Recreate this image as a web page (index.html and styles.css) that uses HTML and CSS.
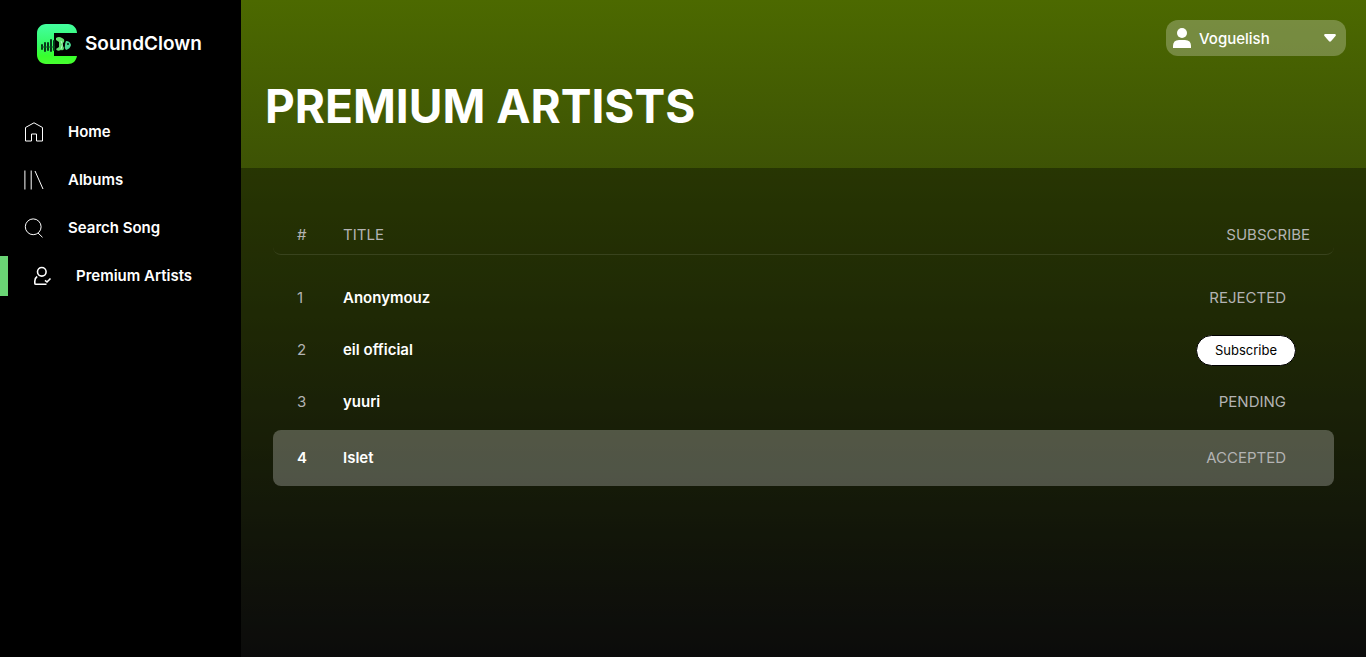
FILE: index.html
```html
<!DOCTYPE html>
<html lang="en">
<head>
<meta charset="utf-8">
<meta name="viewport" content="width=device-width, initial-scale=1">
<title>SoundClown - Premium Artists</title>
<link rel="stylesheet" href="styles.css">
</head>
<body>
<div class="app">
  <aside class="sidebar">
    <a class="brand" href="#">
      <svg class="brand-logo" viewBox="0 0 40 40" aria-hidden="true">
        <defs>
          <linearGradient id="logoFill" x1="0" y1="0" x2="0" y2="1">
            <stop offset="0" stop-color="#43ffa0"/>
            <stop offset="0.5" stop-color="#36fa68"/>
            <stop offset="0.8" stop-color="#38ff2c"/>
            <stop offset="1" stop-color="#48ff30"/>
          </linearGradient>
        </defs>
        <path fill="url(#logoFill)" d="M9 0H31C36 0 40 4 40 9H17V32H40C39 37 36 40 31 40H9C4 40 0 36 0 31V9C0 4 4 0 9 0Z"/>
        <path d="M5 21V25M8 19V27M11 19V26M14 16V27M17 17V26" stroke="#06351a" stroke-width="2" stroke-linecap="round"/>
        <path d="M4 23H18" stroke="#0a5725" stroke-width="1"/>
        <path fill="#62e070" d="M19 14Q22 12 25 14Q28 15 27 18L25 20L27 24Q27 27 24 26Q20 28 19 25L22 23V18L19 16Z"/>
        <path d="M24 17Q27 20 24 25" fill="none" stroke="#b6ffca" stroke-width="1"/>
        <path fill="#49dc93" d="M29 17Q33 17 34 21Q33 25 29 26Q27 24 28 21Q28 19 29 17Z"/>
        <circle cx="31" cy="20" r="1" fill="#05240d"/>
      </svg>
      <span>SoundClown</span>
    </a>
    <nav class="nav">
      <a class="nav-link" href="#">
        <svg class="nav-icon" viewBox="0 0 20 20" aria-hidden="true"><path d="M1.500 5.500L10 .8L18.500 5.500V19H12.500V12H7.500V19H1.500Z"/></svg>
        <span>Home</span>
      </a>
      <a class="nav-link" href="#">
        <svg class="nav-icon" viewBox="0 0 20 20" aria-hidden="true"><path d="M.9 .5V19.500M7.200 .5V19.500M11 1L19 19"/></svg>
        <span>Albums</span>
      </a>
      <a class="nav-link" href="#">
        <svg class="nav-icon" viewBox="0 0 20 20" aria-hidden="true"><circle cx="9.200" cy="8.800" r="7.900"/><path d="M14 15L18.500 19.300"/></svg>
        <span>Search Song</span>
      </a>
      <a class="nav-link nav-link-active" href="#" aria-current="page">
        <svg class="nav-icon nav-icon-bold" viewBox="0 0 20 20" aria-hidden="true"><circle cx="9.800" cy="5.800" r="4.300"/><path d="M5.200 10.500Q2.800 12 2.800 15.200V17.200Q2.800 18.300 4 18.300H14.500M13 14.300L15 16L18.500 12.500"/></svg>
        <span>Premium Artists</span>
      </a>
    </nav>
  </aside>
  <main class="main">
    <header class="hero">
      <button class="user" type="button">
        <svg class="user-icon" viewBox="0 0 18 20" aria-hidden="true"><circle cx="9" cy="5" r="5"/><path d="M0 20V18Q0 12 6 12H12Q18 12 18 18V20Z"/></svg>
        <span class="user-name">Voguelish</span>
        <svg class="user-caret" viewBox="0 0 12 8" aria-hidden="true"><path d="M1 0H11Q12.500 .8 11.500 2L7 7.300Q6 8.200 5 7.300L.5 2Q-.5 .8 1 0Z"/></svg>
      </button>
      <h1 class="title">PREMIUM ARTISTS</h1>
    </header>
    <section class="content">
      <table class="artists">
        <thead>
          <tr><th class="number" scope="col">#</th><th scope="col">TITLE</th><th class="status" scope="col">SUBSCRIBE</th></tr>
        </thead>
        <tbody>
          <tr><td class="number">1</td><td class="name">Anonymouz</td><td class="status">REJECTED</td></tr>
          <tr><td class="number">2</td><td class="name">eil official</td><td class="status status-action"><button class="subscribe" type="button">Subscribe</button></td></tr>
          <tr><td class="number">3</td><td class="name">yuuri</td><td class="status">PENDING</td></tr>
        </tbody>
        <tbody class="highlight">
          <tr><td class="number">4</td><td class="name">Islet</td><td class="status">ACCEPTED</td></tr>
        </tbody>
      </table>
    </section>
  </main>
</div>
</body>
</html>
```
FILE: styles.css
```css
* {
  box-sizing: border-box;
}

body {
  margin: 0;
  background: #000;
  color: #fff;
  font-family: Inter, "Liberation Sans", sans-serif;
  font-size: 15px;
  line-height: 24px;
}

a {
  color: inherit;
  text-decoration: none;
}

button {
  font-family: inherit;
  cursor: pointer;
}

.app {
  display: flex;
  min-height: 100vh;
}

.sidebar {
  flex: 0 0 241px;
  background: #000;
}

.brand {
  display: flex;
  align-items: center;
  gap: 8px;
  padding: 24px 0 0 37px;
  font-size: 19px;
  font-weight: 600;
}

.brand-logo {
  width: 40px;
  height: 40px;
}

.nav {
  display: flex;
  flex-direction: column;
  gap: 8px;
  padding-top: 48px;
}

.nav-link {
  display: flex;
  align-items: center;
  gap: 24px;
  height: 40px;
  padding-left: 24px;
  font-weight: 600;
}

.nav-link-active {
  border-left: 8px solid #6ad575;
}

.nav-icon {
  width: 20px;
  height: 20px;
  fill: none;
  stroke: #fff;
  stroke-width: 1;
}

.nav-icon-bold {
  stroke-width: 1.6;
}

.main {
  display: flex;
  flex: 1;
  flex-direction: column;
  background: linear-gradient(#4c6900, #121212);
}

.hero {
  display: flex;
  flex-direction: column;
  padding: 20px 20px 32px 24px;
}

.user {
  display: flex;
  align-self: flex-end;
  align-items: center;
  gap: 8px;
  width: 180px;
  height: 36px;
  padding: 0 10px 0 7px;
  border: 0;
  border-radius: 12px;
  background: rgba(255, 255, 255, 0.25);
  color: #fff;
  font-size: 15px;
  font-weight: 500;
}

.user-icon {
  width: 18px;
  height: 20px;
  fill: #fff;
}

.user-name {
  flex: 1;
  text-align: left;
}

.user-caret {
  width: 12px;
  height: 8px;
  fill: #fff;
}

.title {
  margin: 20px 0 0;
  font-size: 46px;
  font-weight: 700;
  line-height: 60px;
}

.content {
  flex: 1;
  padding: 48px 32px;
  background: rgba(0, 0, 0, 0.35);
}

.artists {
  width: 100%;
  border-spacing: 0;
  color: #b3b3b3;
}

.artists th {
  height: 39px;
  padding: 0;
  border-bottom: 1px solid rgba(255, 255, 255, 0.1);
  font-weight: 400;
  text-align: left;
}

.artists th:first-child {
  border-bottom-left-radius: 8px;
}

.artists th:last-child {
  border-bottom-right-radius: 8px;
}

.artists td {
  height: 52px;
  padding: 0;
}

.artists thead::after {
  content: "";
  display: table-row;
  height: 17px;
}

.artists .highlight::before {
  content: "";
  display: table-row;
  height: 2px;
}

.artists .number {
  width: 70px;
  padding-left: 24px;
}

.artists .name {
  color: #fff;
  font-weight: 600;
}

.artists .status {
  padding-right: 48px;
  text-align: right;
}

.artists th.status {
  padding-right: 24px;
}

.artists .status-action {
  padding-right: 38px;
}

.subscribe {
  height: 31px;
  padding: 0 18px;
  border: 1px solid #000;
  border-radius: 16px;
  background: #fff;
  color: #000;
  font-size: 13px;
}

.artists .highlight td {
  height: 56px;
  background: rgba(255, 255, 255, 0.25);
}

.artists .highlight .number {
  border-radius: 8px 0 0 8px;
  color: #fff;
  font-weight: 600;
}

.artists .highlight .status {
  border-radius: 0 8px 8px 0;
}
```
